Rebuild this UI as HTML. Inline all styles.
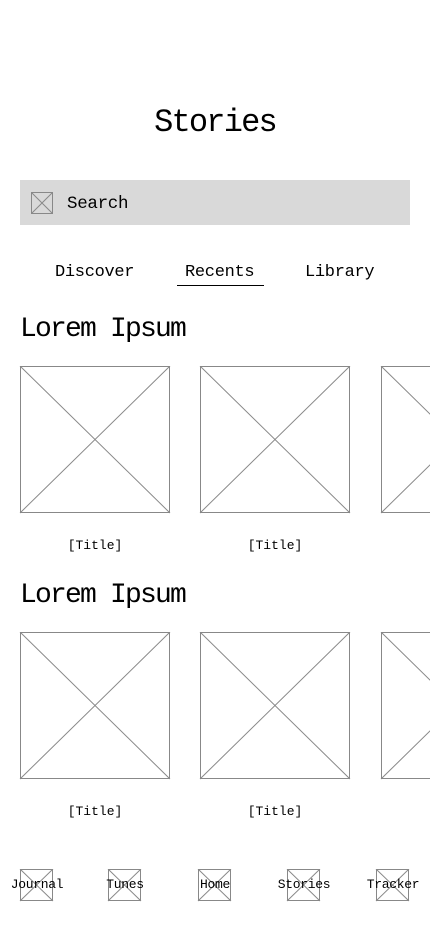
<!DOCTYPE html>
<html><head><style>
body{margin:0;width:430px;height:932px;background:#fff;position:relative;overflow:hidden;font-family:"Liberation Mono","DejaVu Sans Mono",monospace;color:#000}
.a{position:absolute;white-space:nowrap}
svg.x{position:absolute}
</style></head><body>
<div class="a" style="left:0;width:430px;text-align:center;top:103px;font-size:32px;line-height:40px;letter-spacing:-1.8px">Stories</div>
<div class="a" style="left:20px;top:180px;width:390px;height:45px;background:#d9d9d9"></div>
<svg class="x" style="left:31px;top:192px" width="22" height="22"><rect x="0.5" y="0.5" width="21" height="21" fill="none" stroke="#888"/><path d="M0 0L22 22M22 0L0 22" stroke="#888"/></svg>
<div class="a" style="left:67px;top:194px;font-size:17.5px;line-height:20px;letter-spacing:-0.3px">Search</div>
<div class="a" style="left:55px;top:263px;font-size:17px;line-height:20px;letter-spacing:-0.3px">Discover</div>
<div class="a" style="left:185px;top:263px;font-size:17px;line-height:20px;letter-spacing:-0.3px">Recents</div>
<div class="a" style="left:177px;top:285px;width:87px;height:1px;background:#000"></div>
<div class="a" style="left:305px;top:263px;font-size:17px;line-height:20px;letter-spacing:-0.3px">Library</div>

<div class="a" style="left:20px;top:313px;font-size:28px;line-height:34px;letter-spacing:-1.8px">Lorem Ipsum</div>
<svg class="x" style="left:0;top:366px" width="430" height="148"><g fill="none" stroke="#888"><rect x="20.5" y="0.5" width="149" height="146"/><path d="M20 0L170 147M170 0L20 147"/><rect x="200.5" y="0.5" width="149" height="146"/><path d="M200 0L350 147M350 0L200 147"/><rect x="381.5" y="0.5" width="149" height="146"/><path d="M381 0L531 147M531 0L381 147"/></g></svg>
<div class="a" style="left:20px;width:150px;text-align:center;top:538px;font-size:13px;line-height:16px">[Title]</div>
<div class="a" style="left:200px;width:150px;text-align:center;top:538px;font-size:13px;line-height:16px">[Title]</div>

<div class="a" style="left:20px;top:579px;font-size:28px;line-height:34px;letter-spacing:-1.8px">Lorem Ipsum</div>
<svg class="x" style="left:0;top:632px" width="430" height="148"><g fill="none" stroke="#888"><rect x="20.5" y="0.5" width="149" height="146"/><path d="M20 0L170 147M170 0L20 147"/><rect x="200.5" y="0.5" width="149" height="146"/><path d="M200 0L350 147M350 0L200 147"/><rect x="381.5" y="0.5" width="149" height="146"/><path d="M381 0L531 147M531 0L381 147"/></g></svg>
<div class="a" style="left:20px;width:150px;text-align:center;top:804px;font-size:13px;line-height:16px">[Title]</div>
<div class="a" style="left:200px;width:150px;text-align:center;top:804px;font-size:13px;line-height:16px">[Title]</div>

<svg class="x" style="left:0;top:869px" width="430" height="33"><g fill="none" stroke="#888">
<rect x="20.5" y="0.5" width="32" height="31"/><path d="M20 0L53 32M53 0L20 32"/>
<rect x="108.5" y="0.5" width="32" height="31"/><path d="M108 0L141 32M141 0L108 32"/>
<rect x="198.5" y="0.5" width="32" height="31"/><path d="M198 0L231 32M231 0L198 32"/>
<rect x="287.5" y="0.5" width="32" height="31"/><path d="M287 0L320 32M320 0L287 32"/>
<rect x="376.5" y="0.5" width="32" height="31"/><path d="M376 0L409 32M409 0L376 32"/>
</g></svg>
<div class="a" style="left:-3px;width:80px;text-align:center;top:877px;font-size:13px;line-height:16px;letter-spacing:-0.3px">Journal</div>
<div class="a" style="left:85px;width:80px;text-align:center;top:877px;font-size:13px;line-height:16px;letter-spacing:-0.3px">Tunes</div>
<div class="a" style="left:175px;width:80px;text-align:center;top:877px;font-size:13px;line-height:16px;letter-spacing:-0.3px">Home</div>
<div class="a" style="left:264px;width:80px;text-align:center;top:877px;font-size:13px;line-height:16px;letter-spacing:-0.3px">Stories</div>
<div class="a" style="left:353px;width:80px;text-align:center;top:877px;font-size:13px;line-height:16px;letter-spacing:-0.3px">Tracker</div>
</body></html>
